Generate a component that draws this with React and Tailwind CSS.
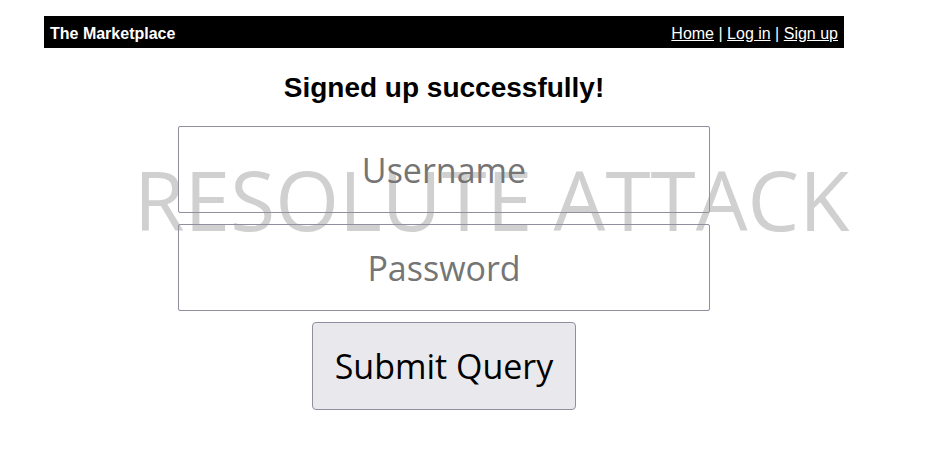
export default function App() {
  return (
    <div className="relative min-h-[459px] bg-white">
      <div className="ml-[44px] w-[800px] pt-[16px]">
        <nav className="flex h-[32px] items-center justify-between bg-black px-[6px] pt-[3px] font-['Liberation_Sans',Arial,sans-serif] text-white">
          <span className="text-[16px] font-bold">The Marketplace</span>
          <span className="text-[16px]">
            <a href="#" className="underline">Home</a> |{' '}
            <a href="#" className="underline">Log in</a> |{' '}
            <a href="#" className="underline">Sign up</a>
          </span>
        </nav>
        <div className="relative flex flex-col items-center">
          <h2 className="mt-[24px] font-['Liberation_Sans',Arial,sans-serif] text-[28px] font-bold leading-[32px] text-black">
            Signed up successfully!
          </h2>
          <div
            aria-hidden="true"
            className="pointer-events-none absolute left-[90px] top-[110px] whitespace-nowrap font-['Open_Sans',sans-serif] text-[82px] leading-none text-[#d0d0d0]"
          >
            RESOLUTE ATTACK
          </div>
          <form className="relative mt-[22px] flex flex-col items-center gap-[11px] font-['Open_Sans',sans-serif]">
            <input
              type="text"
              placeholder="Username"
              className="h-[87px] w-[532px] rounded-[2px] border border-[#8f8f9d] bg-transparent text-center text-[34px] placeholder:text-[#757575]"
            />
            <input
              type="password"
              placeholder="Password"
              className="h-[87px] w-[532px] rounded-[2px] border border-[#8f8f9d] bg-transparent text-center text-[34px] placeholder:text-[#757575]"
            />
            <button
              type="submit"
              className="h-[88px] w-[264px] rounded-[4px] border border-[#8f8f9d] bg-[#e9e9ed] text-[34px] text-black"
            >
              Submit Query
            </button>
          </form>
        </div>
      </div>
    </div>
  );
}
